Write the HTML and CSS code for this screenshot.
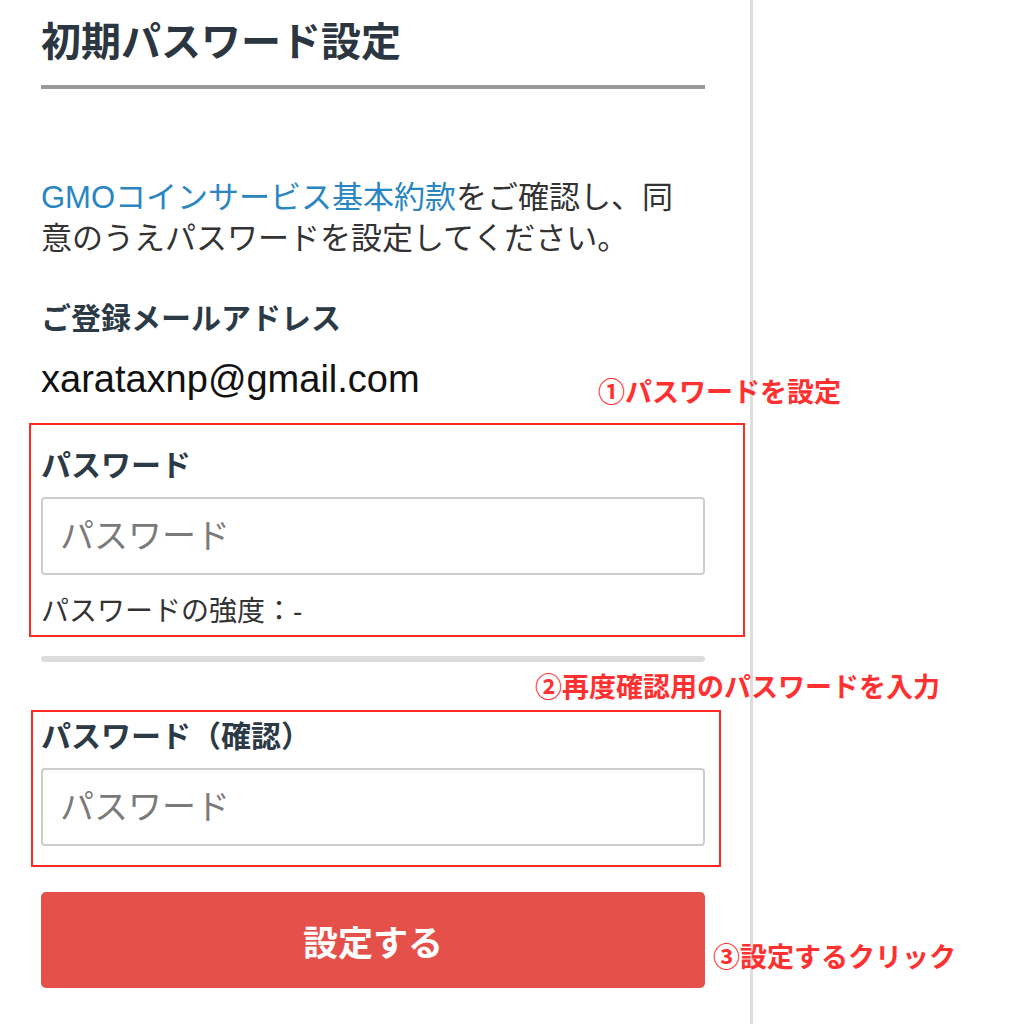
FILE: index.html
```html
<!DOCTYPE html>
<html lang="ja">
<head>
  <meta charset="UTF-8">
  <meta name="viewport" content="width=device-width, initial-scale=1.0">
  <title>初期パスワード設定</title>
  <link rel="stylesheet" href="styles.css">
</head>
<body>
  <div class="panel">
    <h1 class="title">初期パスワード設定</h1>

    <p class="lead"><a href="#" class="link">GMOコインサービス基本約款</a>をご確認し、同意のうえパスワードを設定してください。</p>

    <div class="field-label">ご登録メールアドレス</div>
    <div class="email">xarataxnp@gmail.com</div>

    <div class="group group-password">
      <span class="mark mark-1"></span>
      <span class="note note-1">①パスワードを設定</span>
      <label class="field-label" for="password">パスワード</label>
      <input type="password" id="password" class="input" placeholder="パスワード">
      <p class="strength">パスワードの強度：-</p>
    </div>
    <div class="strength-bar"></div>

    <div class="group group-confirm">
      <span class="mark mark-2"></span>
      <span class="note note-2">②再度確認用のパスワードを入力</span>
      <label class="field-label" for="passwordConfirm">パスワード（確認）</label>
      <input type="password" id="passwordConfirm" class="input" placeholder="パスワード">
    </div>

    <div class="group group-submit">
      <button class="submit">設定する</button>
      <span class="note note-3">③設定するクリック</span>
    </div>
  </div>
</body>
</html>
```

FILE: styles.css
```css
body {
  margin: 0;
  background-color: #fff;
  font-family: "Liberation Sans", "Noto Sans CJK JP", sans-serif;
  color: #333;
}
.panel {
  width: 664px;
  min-height: 1024px;
  padding: 18px 45px 0 41px;
  border-right: 3px solid #dedede;
  box-sizing: content-box;
}
.title {
  margin: 0;
  padding-bottom: 19px;
  border-bottom: 4px solid #9a9a9a;
  font-size: 40px;
  line-height: 48px;
  font-weight: bold;
  color: #2b3641;
}
.lead {
  margin: 88px 0 0;
  max-width: 650px;
  font-size: 31px;
  line-height: 41px;
  color: #333;
}
.link {
  color: #2a86c1;
  text-decoration: none;
}
.field-label {
  display: block;
  font-size: 30px;
  line-height: 40px;
  font-weight: bold;
  color: #2c3a46;
}
.lead + .field-label {
  margin-top: 40px;
}
.email {
  margin-top: 18px;
  font-size: 38px;
  line-height: 44px;
  color: #111;
}
.group {
  position: relative;
}
.group-password {
  margin-top: 45px;
}
.group-confirm {
  margin-top: 55px;
}
.group-submit {
  margin-top: 46px;
}
.input {
  display: block;
  width: 100%;
  height: 78px;
  margin-top: 11px;
  padding: 0 17px;
  box-sizing: border-box;
  border: 2px solid #cdcdcd;
  border-radius: 4px;
  font-family: "Liberation Sans", "Noto Sans CJK JP", sans-serif;
  font-size: 34px;
  color: #333;
  background-color: #fff;
}
.input::placeholder {
  color: #7a7a7a;
}
.strength {
  margin: 19px 0 0;
  font-size: 28px;
  line-height: 36px;
  color: #333;
}
.strength-bar {
  height: 6px;
  margin-top: 26px;
  border-radius: 3px;
  background-color: #dcdcdc;
}
.submit {
  display: block;
  width: 100%;
  height: 96px;
  border: none;
  border-radius: 5px;
  background-color: #e5514a;
  color: #fff;
  font-family: "Liberation Sans", "Noto Sans CJK JP", sans-serif;
  font-size: 35px;
  font-weight: bold;
  cursor: pointer;
}

/* annotation overlays */
.mark {
  position: absolute;
  border: 2px solid #ff2b22;
  pointer-events: none;
}
.mark-1 {
  top: -23px;
  left: -12px;
  right: -40px;
  bottom: -7px;
}
.mark-2 {
  top: -7px;
  left: -10px;
  right: -16px;
  bottom: -21px;
}
.note {
  position: absolute;
  white-space: nowrap;
  font-size: 27px;
  line-height: 32px;
  font-weight: bold;
  color: #ff3030;
}
.note-1 {
  top: -69px;
  left: 557px;
}
.note-2 {
  top: -45px;
  left: 494px;
}
.note-3 {
  top: 50px;
  left: 672px;
}
```
